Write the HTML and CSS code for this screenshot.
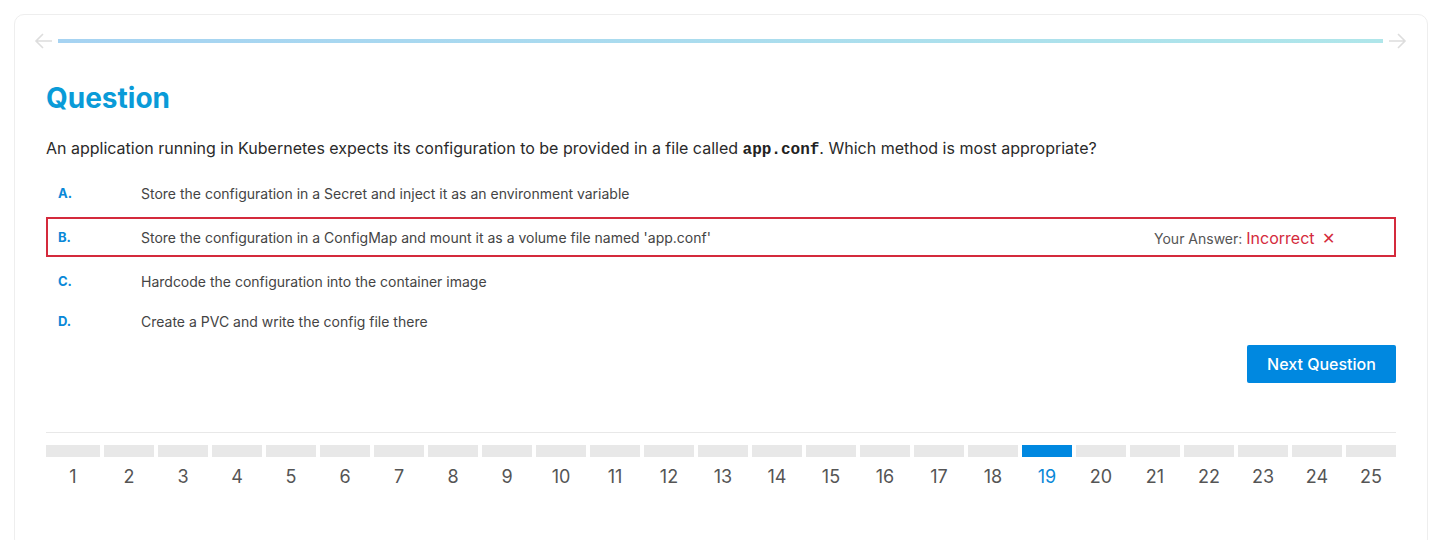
FILE: index.html
```html
<!DOCTYPE html>
<html lang="en">
<head>
<meta charset="utf-8">
<title>Question</title>
<link rel="stylesheet" href="styles.css">
</head>
<body>
<div class="card">
  <div class="progress-row">
    <svg class="arrow" viewBox="0 0 20 20" width="20" height="20"><path d="M18 10H2M9 3L2 10L9 17" fill="none" stroke="#dddddd" stroke-width="1.6"/></svg>
    <div class="progress-line"></div>
    <svg class="arrow" viewBox="0 0 20 20" width="20" height="20"><path d="M2 10H18M11 3L18 10L11 17" fill="none" stroke="#dddddd" stroke-width="1.6"/></svg>
  </div>

  <h1 class="title">Question</h1>
  <p class="question">An application running in Kubernetes expects its configuration to be provided in a file called <code>app.conf</code>. Which method is most appropriate?</p>

  <div class="options">
    <div class="option"><span class="letter">A.</span><span class="text">Store the configuration in a Secret and inject it as an environment variable</span></div>
    <div class="option selected"><span class="letter">B.</span><span class="text">Store the configuration in a ConfigMap and mount it as a volume file named 'app.conf'</span><span class="verdict">Your Answer: <span class="wrong">Incorrect <span class="x">✕</span></span></span></div>
    <div class="option"><span class="letter">C.</span><span class="text">Hardcode the configuration into the container image</span></div>
    <div class="option"><span class="letter">D.</span><span class="text">Create a PVC and write the config file there</span></div>
  </div>

  <div class="actions"><button class="next">Next Question</button></div>

  <div class="pager">
    <div class="step"><span class="bar"></span><span class="num">1</span></div>
    <div class="step"><span class="bar"></span><span class="num">2</span></div>
    <div class="step"><span class="bar"></span><span class="num">3</span></div>
    <div class="step"><span class="bar"></span><span class="num">4</span></div>
    <div class="step"><span class="bar"></span><span class="num">5</span></div>
    <div class="step"><span class="bar"></span><span class="num">6</span></div>
    <div class="step"><span class="bar"></span><span class="num">7</span></div>
    <div class="step"><span class="bar"></span><span class="num">8</span></div>
    <div class="step"><span class="bar"></span><span class="num">9</span></div>
    <div class="step"><span class="bar"></span><span class="num">10</span></div>
    <div class="step"><span class="bar"></span><span class="num">11</span></div>
    <div class="step"><span class="bar"></span><span class="num">12</span></div>
    <div class="step"><span class="bar"></span><span class="num">13</span></div>
    <div class="step"><span class="bar"></span><span class="num">14</span></div>
    <div class="step"><span class="bar"></span><span class="num">15</span></div>
    <div class="step"><span class="bar"></span><span class="num">16</span></div>
    <div class="step"><span class="bar"></span><span class="num">17</span></div>
    <div class="step"><span class="bar"></span><span class="num">18</span></div>
    <div class="step active"><span class="bar"></span><span class="num">19</span></div>
    <div class="step"><span class="bar"></span><span class="num">20</span></div>
    <div class="step"><span class="bar"></span><span class="num">21</span></div>
    <div class="step"><span class="bar"></span><span class="num">22</span></div>
    <div class="step"><span class="bar"></span><span class="num">23</span></div>
    <div class="step"><span class="bar"></span><span class="num">24</span></div>
    <div class="step"><span class="bar"></span><span class="num">25</span></div>
  </div>
</div>
</body>
</html>
```

FILE: styles.css
```css
html, body {
  margin: 0;
  padding: 0;
  background: #ffffff;
}
body {
  font-family: Inter, "Noto Sans", "Liberation Sans", sans-serif;
  color: #333333;
  padding: 14px 22px 0 14px;
  overflow: hidden;
  height: 540px;
  box-sizing: border-box;
}
.card {
  border: 1px solid #eeeeee;
  border-radius: 10px;
  padding: 15px 31px 60px 31px;
  background: #fff;
}
.progress-row {
  display: flex;
  align-items: center;
  margin: 0 -11px 0 -12px;
  height: 22px;
}
.arrow {
  flex: none;
  display: block;
}
.progress-line {
  flex: 1;
  height: 4px;
  margin: 0 4px 0 4px;
  background: linear-gradient(90deg, #a6d3f2 0%, #afe6ea 100%);
}
.title {
  margin: 28px 0 0 0;
  font-size: 28px;
  line-height: 36px;
  font-weight: 700;
  color: #0a9bd8;
}
.question {
  margin: 20px 0 0 0;
  font-size: 16px;
  line-height: 24px;
  color: #2a2a2a;
}
.question code {
  font-family: "Liberation Mono", "DejaVu Sans Mono", monospace;
  font-weight: 700;
  font-size: 16px;
  color: #222;
}
.options {
  margin-top: 11px;
}
.option {
  display: flex;
  align-items: center;
  height: 40px;
  box-sizing: border-box;
  border: 2px solid transparent;
  padding: 0 10px;
}
.option.selected {
  border-color: #d42a3c;
  margin: 4px 0;
}
.letter {
  width: 83px;
  flex: none;
  font-size: 13px;
  font-weight: 700;
  color: #0a88d8;
}
.text {
  flex: 1;
  font-size: 14px;
  color: #444444;
}
.verdict {
  font-size: 14px;
  color: #555555;
  margin-right: 49px;
  margin-top: 1px;
}
.wrong {
  font-size: 16px;
  color: #d42a3c;
}
.x {
  margin-left: 3px;
}
.actions {
  display: flex;
  justify-content: flex-end;
  margin-top: 4px;
}
.next {
  width: 149px;
  height: 38px;
  border: none;
  border-radius: 2px;
  background: #0088e0;
  color: #fff;
  font-family: inherit;
  font-size: 16px;
  font-weight: 500;
  cursor: pointer;
}
.pager {
  margin-top: 49px;
  border-top: 1px solid #e8e8e8;
  padding-top: 12px;
  display: flex;
  gap: 4px;
}
.step {
  flex: 50px 0 0;
  display: flex;
  flex-direction: column;
  align-items: center;
}
.step:first-child {
  flex-basis: 54px;
}
.bar {
  display: block;
  width: 100%;
  height: 12px;
  background: #e8e8e8;
}
.num {
  margin-top: 9px;
  font-size: 18px;
  line-height: 22px;
  color: #555555;
}
.step.active .bar {
  background: #0088e0;
}
.step.active .num {
  color: #0a88d8;
}
```
